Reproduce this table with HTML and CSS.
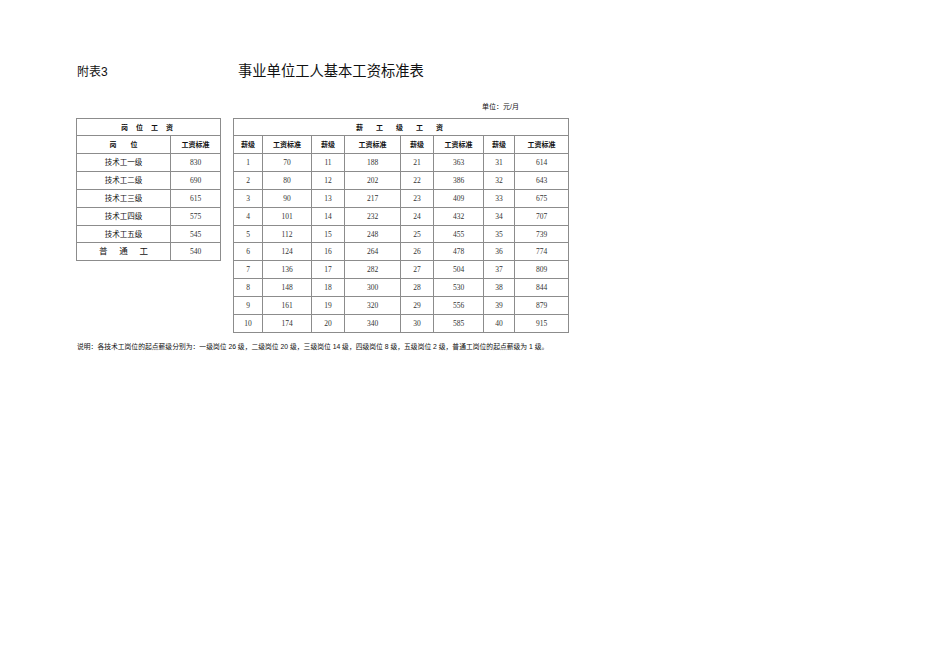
FILE: index.html
```html
<!DOCTYPE html>
<html lang="zh">
<head>
<meta charset="utf-8">
<title>事业单位工人基本工资标准表</title>
<link rel="stylesheet" href="styles.css">
</head>
<body>
<div class="page">
  <div class="head">
    <div class="annex">附表3</div>
    <div class="title">事业单位工人基本工资标准表</div>
  </div>
  <div class="unit">单位：元/月</div>
  <div class="tables">
    <table class="tbl left">
      <colgroup><col class="c-post"><col class="c-std"></colgroup>
      <tr class="r-title"><th colspan="2" class="spaced">岗 位 工 资</th></tr>
      <tr class="r-head"><th class="wide">岗　　位</th><th>工资标准</th></tr>
      <tr><td class="cn">技术工一级</td><td class="num">830</td></tr>
      <tr><td class="cn">技术工二级</td><td class="num">690</td></tr>
      <tr><td class="cn">技术工三级</td><td class="num">615</td></tr>
      <tr><td class="cn">技术工四级</td><td class="num">575</td></tr>
      <tr><td class="cn">技术工五级</td><td class="num">545</td></tr>
      <tr><td class="cn general">普 通 工</td><td class="num">540</td></tr>
    </table>
    <table class="tbl right">
      <colgroup>
        <col class="w29"><col class="w49"><col class="w33"><col class="w56">
        <col class="w33"><col class="w50"><col class="w31"><col class="w54">
      </colgroup>
      <tr class="r-title"><th colspan="8" class="spaced">薪　工　级　工　资</th></tr>
      <tr class="r-head">
        <th>薪级</th><th>工资标准</th><th>薪级</th><th>工资标准</th>
        <th>薪级</th><th>工资标准</th><th>薪级</th><th>工资标准</th>
      </tr>
      <tr><td class="num">1</td><td class="num">70</td><td class="num">11</td><td class="num">188</td><td class="num">21</td><td class="num">363</td><td class="num">31</td><td class="num">614</td></tr>
      <tr><td class="num">2</td><td class="num">80</td><td class="num">12</td><td class="num">202</td><td class="num">22</td><td class="num">386</td><td class="num">32</td><td class="num">643</td></tr>
      <tr><td class="num">3</td><td class="num">90</td><td class="num">13</td><td class="num">217</td><td class="num">23</td><td class="num">409</td><td class="num">33</td><td class="num">675</td></tr>
      <tr><td class="num">4</td><td class="num">101</td><td class="num">14</td><td class="num">232</td><td class="num">24</td><td class="num">432</td><td class="num">34</td><td class="num">707</td></tr>
      <tr><td class="num">5</td><td class="num">112</td><td class="num">15</td><td class="num">248</td><td class="num">25</td><td class="num">455</td><td class="num">35</td><td class="num">739</td></tr>
      <tr><td class="num">6</td><td class="num">124</td><td class="num">16</td><td class="num">264</td><td class="num">26</td><td class="num">478</td><td class="num">36</td><td class="num">774</td></tr>
      <tr><td class="num">7</td><td class="num">136</td><td class="num">17</td><td class="num">282</td><td class="num">27</td><td class="num">504</td><td class="num">37</td><td class="num">809</td></tr>
      <tr><td class="num">8</td><td class="num">148</td><td class="num">18</td><td class="num">300</td><td class="num">28</td><td class="num">530</td><td class="num">38</td><td class="num">844</td></tr>
      <tr><td class="num">9</td><td class="num">161</td><td class="num">19</td><td class="num">320</td><td class="num">29</td><td class="num">556</td><td class="num">39</td><td class="num">879</td></tr>
      <tr><td class="num">10</td><td class="num">174</td><td class="num">20</td><td class="num">340</td><td class="num">30</td><td class="num">585</td><td class="num">40</td><td class="num">915</td></tr>
    </table>
  </div>
  <div class="note">说明：各技术工岗位的起点薪级分别为：一级岗位 26 级，二级岗位 20 级，三级岗位 14 级，四级岗位 8 级，五级岗位 2 级，普通工岗位的起点薪级为 1 级。</div>
</div>
</body>
</html>
```
FILE: styles.css
```css
html, body {
  margin: 0;
  padding: 0;
  background: #ffffff;
}
body {
  font-family: "Liberation Sans", "Noto Sans CJK SC", sans-serif;
  color: #111;
}
.page {
  width: 950px;
  height: 672px;
  padding: 0 0 0 76px;
  box-sizing: border-box;
}
.head {
  display: flex;
  align-items: flex-end;
  padding-top: 61px;
  height: 19px;
}
.annex {
  width: 161px;
  font-size: 12px;
  line-height: 14px;
  padding-left: 1px;
  padding-bottom: 1px;
}
.title {
  font-size: 14.3px;
  line-height: 18px;
}
.unit {
  margin-top: 22px;
  padding-left: 406px;
  font-size: 7px;
  line-height: 9px;
}
.tables {
  display: flex;
  align-items: flex-start;
  gap: 12px;
  margin-top: 7px;
}
.tbl {
  border-collapse: collapse;
  table-layout: fixed;
  border: 1px solid #6a6a6a;
}
.tbl th, .tbl td {
  border: 1px solid #8c8c8c;
  padding: 0;
  text-align: center;
  vertical-align: middle;
  overflow: hidden;
  white-space: nowrap;
}
.left { width: 144px; }
.right { width: 335px; }
.c-post { width: 94px; }
.c-std { width: 50px; }
.w29 { width: 29px; }
.w49 { width: 49px; }
.w33 { width: 33px; }
.w56 { width: 56px; }
.w50 { width: 50px; }
.w31 { width: 31px; }
.w54 { width: 54px; }
.tbl tr { height: 17.9px; }
.tbl tr.r-title { height: 17px; }
.tbl tr.r-head { height: 18px; }
.tbl th {
  font-size: 7px;
  font-weight: bold;
  line-height: 9px;
}
.tbl th.spaced { letter-spacing: 3px; }
.tbl th.wide { letter-spacing: 0; }
.num {
  font-family: "Liberation Serif", serif;
  font-size: 7.5px;
  line-height: 9px;
  color: #333;
}
.cn {
  font-size: 7.5px;
  line-height: 9px;
}
.cn.general {
  font-size: 8.5px;
  letter-spacing: 4.75px;
  padding-left: 4.75px;
}
.note {
  margin-top: 9px;
  padding-left: 1px;
  font-size: 6.8px;
  line-height: 9px;
  white-space: nowrap;
}
```
